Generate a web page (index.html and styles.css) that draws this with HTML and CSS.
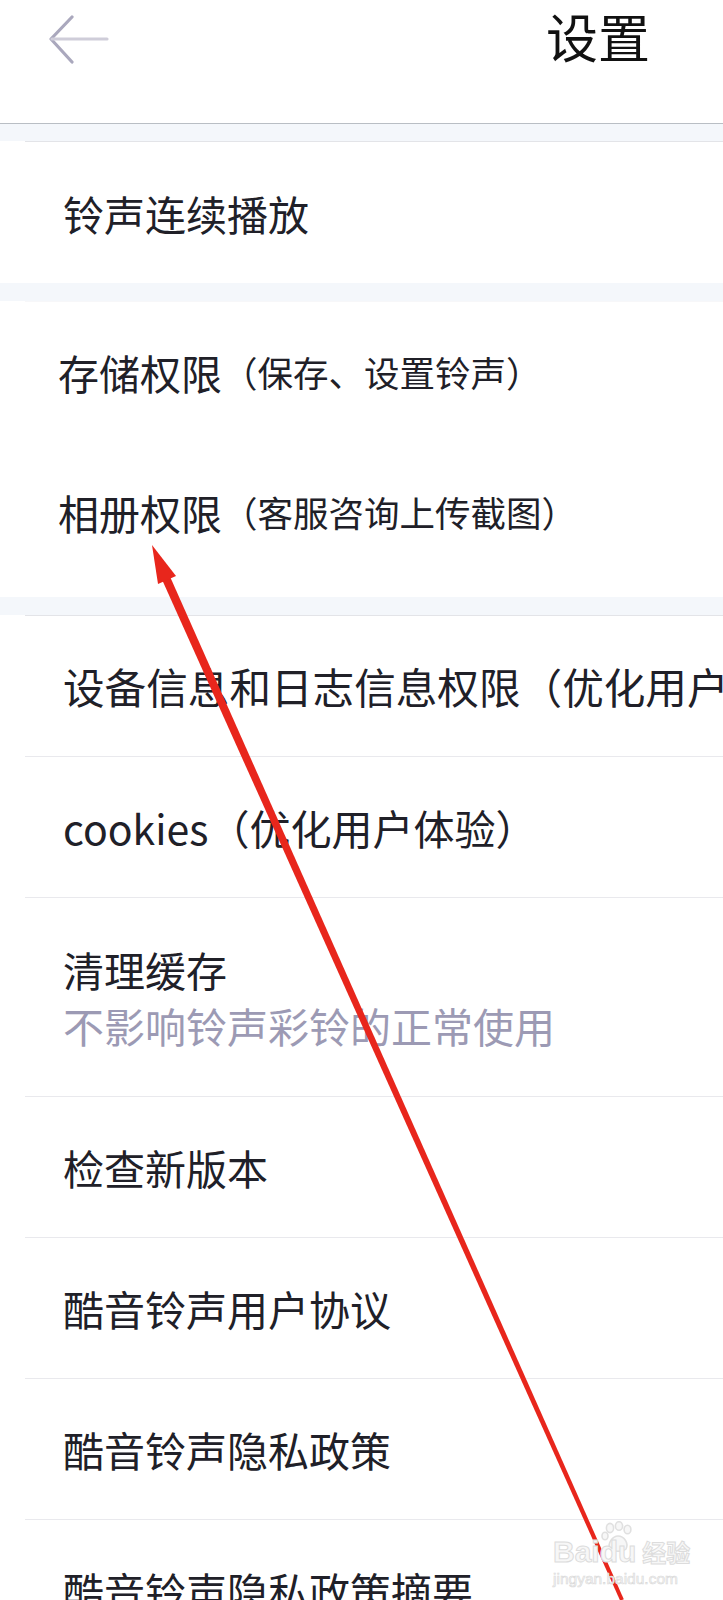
FILE: index.html
```html
<!DOCTYPE html>
<html lang="zh-CN">
<head>
<meta charset="utf-8">
<title>设置</title>
<link rel="stylesheet" href="styles.css">
</head>
<body>
<div class="page">
	<header class="topbar">
		<svg class="back" width="64" height="50" viewBox="0 0 64 50">
			<polyline points="24,3 3,25 24,48" fill="none" stroke="#aaa8bd" stroke-width="3.2" stroke-linecap="round" stroke-linejoin="round"/>
			<line x1="4" y1="25" x2="59" y2="25" stroke="#cfcdd9" stroke-width="3.2" stroke-linecap="round"/>
		</svg>
		<h1 class="title">设置</h1>
	</header>

	<div class="gap top"></div>
	<section class="group">
		<div class="list">
			<div class="row">铃声连续播放</div>
		</div>
	</section>

	<div class="gap"></div>
	<section class="group perms">
		<div class="list faint">
			<div class="row plain">存储权限<span class="note">（保存、设置铃声）</span></div>
			<div class="row plain">相册权限<span class="note">（客服咨询上传截图）</span></div>
		</div>
	</section>

	<div class="gap"></div>
	<section class="group">
		<div class="list">
			<div class="row wide">设备信息和日志信息权限（优化用户体验）</div>
			<div class="row">cookies（优化用户体验）</div>
			<div class="row double">
				<div>清理缓存</div>
				<div class="sub">不影响铃声彩铃的正常使用</div>
			</div>
			<div class="row">检查新版本</div>
			<div class="row">酷音铃声用户协议</div>
			<div class="row">酷音铃声隐私政策</div>
			<div class="row">酷音铃声隐私政策摘要</div>
		</div>
	</section>

	<!-- red arrow drawn over the screenshot -->
	<svg class="mark" width="723" height="1600" viewBox="0 0 723 1600">
		<polygon points="160.4,576 168.2,572.4 623.8,1599.2 620.2,1600.8" fill="#e8261c"/>
		<polygon points="152,545 176,576 158,584" fill="#e8261c"/>
	</svg>

	<div class="watermark">
		<svg class="paw" width="36" height="32" viewBox="0 0 36 32">
			<g fill="#f7f7f7" stroke="#e0e0e0" stroke-width="1.6">
				<ellipse cx="10" cy="7" rx="3.6" ry="4.6"/>
				<ellipse cx="19" cy="5" rx="3.6" ry="4.3"/>
				<ellipse cx="27.5" cy="8.5" rx="3.4" ry="4.3"/>
				<ellipse cx="5" cy="15" rx="3" ry="3.8"/>
				<path d="M10 28 C7 22 13 15 18 15 C24 15 29 22 26 28 C23 31 13 31 10 28 Z"/>
			</g>
		</svg>
		<div class="wm-brand">
			<span>Baidu</span>
			<span class="wm-cn">经验</span>
		</div>
		<div class="wm-url">jingyan.baidu.com</div>
	</div>
</div>
</body>
</html>
```

FILE: styles.css
```css
html, body { margin: 0; padding: 0; background: #fff; }

body {
	font-family: "Noto Sans CJK SC", "Noto Sans", sans-serif;
	color: #202028;
	overflow-x: hidden;
}

.page { position: relative; width: 723px; min-height: 1600px; overflow: hidden; }

.topbar {
	height: 123px;
	display: flex; align-items: flex-start; justify-content: space-between;
	padding: 0 73px 0 48px;
	box-sizing: border-box;
}
.back { margin-top: 14px; flex-shrink: 0; }
.title {
	margin: 0; padding-top: 1px;
	font-size: 52px; line-height: 70px; font-weight: 400;
	color: #111;
	white-space: nowrap; flex-shrink: 0;
}

.gap { height: 18px; background: #f4f7fb; }
.gap.top { height: 17px; border-top: 1px solid #b9bec4; }

.group { padding-left: 25px; background: #fff; }
.list { border-top: 1px solid #e3e4e8; }
.list.faint { border-top-color: #f7f7f9; }

.row {
	height: 140px;
	display: flex; align-items: center;
	padding-left: 38px;
	font-size: 41px; line-height: 56px;
	white-space: nowrap;
	border-bottom: 1px solid #e9e9ed;
}
.row.wide { font-size: 41.6px; }
.group:first-of-type .row { height: 141px; }
.list .row:last-child { border-bottom: none; }

.perms .list { padding: 0 0 15px; }
.row.plain { border-bottom: none; padding-left: 33px; }
.note { font-size: 35.5px; }

.row.double {
	height: 198px;
	flex-direction: column; align-items: flex-start; justify-content: center;
}
.sub { color: #9c9ab4; }

.mark { position: absolute; left: 0; top: 0; pointer-events: none; }

.watermark {
	position: absolute; left: 553px; top: 1521px;
	color: #f7f7f7;
	-webkit-text-stroke: 1px #dcdcdc;
	font-family: "Liberation Sans", sans-serif;
	white-space: nowrap;
}
.paw { position: absolute; left: 47px; top: 0; }
.wm-brand {
	display: flex; align-items: flex-end;
	padding-top: 17px;
	font-size: 30px; line-height: 28px; font-weight: 700;
	position: relative;
}
.wm-cn { font-family: "Noto Sans CJK SC", sans-serif; font-size: 24px; margin-left: 6px; }
.wm-url { font-size: 15.5px; margin-top: 4px; -webkit-text-stroke: 0.6px #d8d8d8; }
```
